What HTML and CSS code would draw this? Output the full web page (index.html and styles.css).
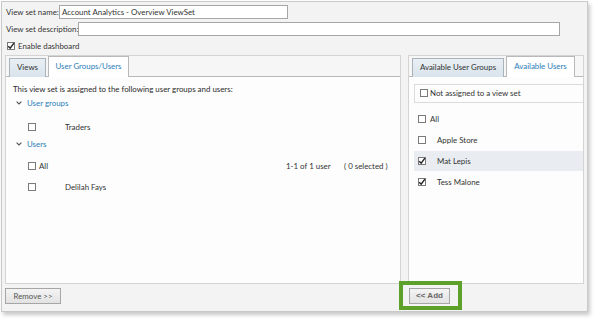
FILE: index.html
```html
<!DOCTYPE html>
<html>
<head>
<meta charset="utf-8">
<link rel="stylesheet" href="styles.css">
</head>
<body>
<div class="frame">
  <div class="field-row">
    <span class="lbl name-lbl">View set name:</span>
    <span class="input name-input">Account Analytics - Overview ViewSet</span>
  </div>
  <div class="field-row">
    <span class="lbl desc-lbl">View set description:</span>
    <span class="input desc-input"></span>
  </div>
  <div class="check-row">
    <span class="cb checked"><svg viewBox="0 0 8 8"><path d="M1.2 4.2 L3.2 6.2 L6.9 1.2" fill="none" stroke="#222" stroke-width="1.4"/></svg></span>
    <span class="lbl">Enable dashboard</span>
  </div>

  <div class="panels">
    <div class="panel left">
      <div class="tabstrip">
        <span class="tab">Views</span>
        <span class="tab active">User Groups/Users</span>
      </div>
      <div class="panel-body">
        <div class="intro">This view set is assigned to the following user groups and users:</div>
        <div class="section groups"><svg class="chev" viewBox="0 0 6 4"><path d="M0.6 0.6 L3 3 L5.4 0.6" fill="none" stroke="#555" stroke-width="1.1"/></svg><span class="link">User groups</span></div>
        <div class="item first"><span class="cb"></span><span class="name">Traders</span></div>
        <div class="section users"><svg class="chev" viewBox="0 0 6 4"><path d="M0.6 0.6 L3 3 L5.4 0.6" fill="none" stroke="#555" stroke-width="1.1"/></svg><span class="link">Users</span></div>
        <div class="all-row">
          <span class="cb"></span><span class="all">All</span>
          <span class="count">1-1 of 1 user</span>
          <span class="selected">( 0 selected )</span>
        </div>
        <div class="item"><span class="cb"></span><span class="name">Delilah Fays</span></div>
      </div>
    </div>
    <div class="panel right">
      <div class="tabstrip">
        <span class="tab">Available User Groups</span>
        <span class="tab active">Available Users</span>
      </div>
      <div class="panel-body">
        <div class="filter"><span class="cb"></span><span>Not assigned to a view set</span></div>
        <div class="r-all"><span class="cb"></span><span>All</span></div>
        <div class="r-item"><span class="cb"></span><span class="r-name">Apple Store</span></div>
        <div class="r-item hl"><span class="cb checked"><svg viewBox="0 0 8 8"><path d="M1.2 4.2 L3.2 6.2 L6.9 1.2" fill="none" stroke="#222" stroke-width="1.4"/></svg></span><span class="r-name">Mat Lepis</span></div>
        <div class="r-item"><span class="cb checked"><svg viewBox="0 0 8 8"><path d="M1.2 4.2 L3.2 6.2 L6.9 1.2" fill="none" stroke="#222" stroke-width="1.4"/></svg></span><span class="r-name">Tess Malone</span></div>
      </div>
    </div>
  </div>

  <div class="buttons">
    <div class="btn-cell left-cell"><span class="btn">Remove &gt;&gt;</span></div>
    <div class="btn-cell right-cell"><span class="highlight"><span class="btn add">&lt;&lt; Add</span></span></div>
  </div>
</div>
</body>
</html>
```

FILE: styles.css
```css
* { box-sizing: border-box; }
html, body { margin: 0; padding: 0; background: #ffffff; }
body {
  font-family: "Lato", "Open Sans", sans-serif;
  font-size: 7.9px;
  color: #333;
  width: 597px;
  height: 321px;
  overflow: hidden;
}
.frame {
  margin: 1px 0 0 1px;
  width: 587px;
  height: 311px;
  border: 1px solid #c9c9c9;
  background: #f3f3f3;
  box-shadow: 2px 3px 4px rgba(0,0,0,0.22);
  padding: 2px 3px 0 3px;
  display: flex;
  flex-direction: column;
}
.field-row {
  height: 17px;
  display: flex;
  align-items: center;
  padding-left: 1px;
}
.lbl { white-space: nowrap; color: #333; }
.name-lbl { width: 53px; flex: none; }
.desc-lbl { width: 72px; flex: none; }
.input {
  height: 14px;
  border: 1px solid #a6a6a6;
  background: #fff;
  padding: 0 2px;
  line-height: 12px;
  white-space: nowrap;
  flex: none;
  color: #333;
}
.name-input { width: 229px; }
.desc-input { width: 482px; }
.check-row {
  height: 16px;
  display: flex;
  align-items: center;
  gap: 3px;
  padding-left: 2px;
}
.cb {
  width: 8px;
  height: 8px;
  border: 1px solid #7a7a7a;
  background: #fff;
  display: inline-block;
  flex: none;
  position: relative;
}
.cb svg { position: absolute; left: -1px; top: -1px; width: 8px; height: 8px; }
.panels {
  display: flex;
  gap: 7px;
  height: 230px;
  margin-top: 1px;
}
.panel {
  border: 1px solid #d4d4d4;
  background: #fdfdfd;
  display: flex;
  flex-direction: column;
}
.panel.left { width: 396px; }
.panel.right { width: 176px; }
.tabstrip {
  height: 21px;
  background: #f6f6f6;
  border-bottom: 1px solid #b9b9b9;
  display: flex;
  align-items: flex-end;
  padding-left: 3px;
  gap: 2px;
}
.tab {
  border: 1px solid #a9b3bb;
  border-bottom: none;
  background: linear-gradient(#e9eff4, #d9e3eb);
  line-height: 17px;
  color: #333;
  white-space: nowrap;
  margin-bottom: -1px;
  height: 19px;
  padding: 0;
  text-align: center;
}
.tab.active {
  background: #fff;
  color: #2b7db8;
  height: 21px;
  line-height: 19px;
  border-color: #b9b9b9;
}
.panel.left .tab:first-child { width: 37px; }
.panel.left .tab.active { width: 81px; }
.panel.right .tab:first-child { width: 92px; }
.panel.right .tab.active { width: 69px; }
.panel-body {
  flex: 1;
  background: #fdfdfd;
  color: #333;
}
.panel.left .panel-body { padding: 7px 0 0 7px; }
.intro { height: 11px; line-height: 11px; white-space: nowrap; color: #2a2a2a; }
.section {
  height: 16px;
  display: flex;
  align-items: center;
  padding-left: 3px;
  gap: 5px;
}
.section.users { height: 14px; }
.chev { width: 6px; height: 4px; }
.link { color: #2b7db8; }
.item {
  height: 20px;
  display: flex;
  align-items: center;
  padding-left: 15px;
  color: #333;
}
.item.first { margin-top: 6px; }
.item .name { margin-left: 29px; color: #333; }
.all-row {
  height: 22px;
  display: flex;
  align-items: center;
  padding-left: 15px;
  margin-top: 4px;
  white-space: nowrap;
}
.all-row .all { margin-left: 3px; width: 247px; }
.all-row .count { width: 58px; }
.panel.right .panel-body { padding: 7px 0 0 5px; }
.filter {
  height: 19px;
  border: 1px solid #dcdcdc;
  border-right: none;
  display: flex;
  align-items: center;
  padding-left: 5px;
  gap: 2px;
  white-space: nowrap;
}
.r-all {
  height: 19px;
  display: flex;
  align-items: center;
  padding-left: 4px;
  gap: 4px;
  margin-top: 7px;
}
.r-item {
  height: 20px;
  display: flex;
  align-items: center;
  padding-left: 4px;
  margin-top: 1px;
}
.r-item .r-name { margin-left: 11px; }
.r-item.hl { background: #e9edf1; }
.buttons {
  display: flex;
  height: 27px;
  gap: 7px;
  align-items: flex-start;
}
.btn-cell { display: flex; }
.left-cell { width: 396px; padding-top: 4px; }
.right-cell { width: 176px; }
.btn {
  height: 16px;
  border: 1px solid #a6a6a6;
  background: linear-gradient(#f4f4f4, #e2e2e2);
  line-height: 14px;
  color: #555;
  white-space: nowrap;
  text-align: center;
}
.left-cell .btn { width: 56px; }
.highlight {
  border: 4px solid #5ea12a;
  padding: 3px 8px 2px 6px;
  margin-left: -9px;
  margin-top: -3px;
  display: inline-block;
}
.highlight .btn { display: block; width: 41px; }
.btn.add { font-family: "Liberation Sans", Arial, sans-serif; font-size: 8px; font-weight: bold; color: #666; }
```
